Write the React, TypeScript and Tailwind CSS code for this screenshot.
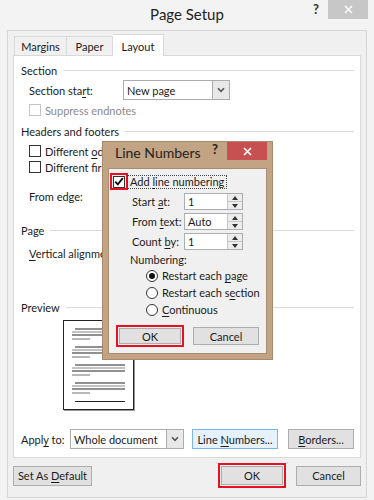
import React from "react";

const U = ({ children }: { children: React.ReactNode }) => (
  <span className="underline underline-offset-[2px]">{children}</span>
);

function Header({ label }: { label: string }) {
  return (
    <div className="flex items-center h-[16px] pl-[7px] pr-[6px]">
      <span>{label}</span>
      <div className="flex-1 h-px bg-[#dcdcdc] ml-[6px]" />
    </div>
  );
}

function Check({ disabled, checked }: { disabled?: boolean; checked?: boolean }) {
  return (
    <div
      className={
        "w-[12px] h-[12px] border bg-white flex items-center justify-center shrink-0 " +
        (disabled ? "border-[#c4c4c4] bg-[#f4f4f4]" : "border-[#333333]")
      }
    >
      {checked && (
        <svg width="10" height="9" viewBox="0 0 10 9">
          <path d="M1.2 4.6 L3.8 7.3 L8.8 1.2" fill="none" stroke="#111" strokeWidth="1.9" />
        </svg>
      )}
    </div>
  );
}

function Chevron() {
  return (
    <svg width="8" height="6" viewBox="0 0 8 6">
      <path d="M1 1.2 L4 4.3 L7 1.2" fill="none" stroke="#555" strokeWidth="1.6" />
    </svg>
  );
}

function Select({ w, h, text }: { w: string; h: string; text: string }) {
  return (
    <div className={"flex border border-[#acacac] bg-white " + w + " " + h}>
      <div className="flex-1 flex items-center pl-[3px]">{text}</div>
      <div className="w-[17px] border-l border-[#acacac] bg-[#e8e8e8] flex items-center justify-center">
        <Chevron />
      </div>
    </div>
  );
}

function Btn({
  children,
  className,
}: {
  children: React.ReactNode;
  className: string;
}) {
  return (
    <div className={"flex items-center justify-center border " + className}>
      <span>{children}</span>
    </div>
  );
}

function Spinner({ value }: { value: string }) {
  return (
    <div className="flex w-[59px] h-[17px] border border-[#abadb3] bg-white">
      <div className="flex-1 flex items-center pl-[3px]">{value}</div>
      <div className="w-[15px] flex flex-col bg-[#ececec] border-l border-[#c8c8c8]">
        <div className="flex-1 flex items-center justify-center border-b border-[#c8c8c8]">
          <svg width="6" height="4" viewBox="0 0 6 4">
            <path d="M0 4 L3 0 L6 4 Z" fill="#333" />
          </svg>
        </div>
        <div className="flex-1 flex items-center justify-center">
          <svg width="6" height="4" viewBox="0 0 6 4">
            <path d="M0 0 L3 4 L6 0 Z" fill="#333" />
          </svg>
        </div>
      </div>
    </div>
  );
}

function Radio({ checked }: { checked?: boolean }) {
  return (
    <div className="w-[12px] h-[12px] rounded-full border border-[#333] bg-white flex items-center justify-center shrink-0">
      {checked && <div className="w-[6px] h-[6px] rounded-full bg-[#111]" />}
    </div>
  );
}

function PreviewPage() {
  const groups = [329, 347, 365, 383];
  const lines: React.ReactNode[] = [];
  groups.forEach((g, i) => {
    const y = g - 320;
    lines.push(<line key={i + "a"} x1={12} x2={62} y1={y} y2={y} stroke="#222" strokeWidth="1" />);
    lines.push(<line key={i + "b"} x1={9} x2={62} y1={y + 3} y2={y + 3} stroke="#888" strokeWidth="1.2" />);
    lines.push(<line key={i + "c"} x1={9} x2={62} y1={y + 6} y2={y + 6} stroke="#222" strokeWidth="1" />);
    lines.push(<line key={i + "d"} x1={9} x2={27} y1={y + 10} y2={y + 10} stroke="#888" strokeWidth="1.2" />);
  });
  return (
    <div className="ml-[49px] mt-[5px] w-[71px] h-[90px] border border-[#222] bg-white shadow-[1px_1px_0_#9a9a9a]">
      <svg width="69" height="88" viewBox="0 0 69 88">
        <g transform="translate(-1,-1)">
          {lines}
          <line x1={12} x2={62} y1={81.5} y2={81.5} stroke="#222" strokeWidth="1" />
        </g>
      </svg>
    </div>
  );
}

function LineNumbersDialog() {
  return (
    <div className="absolute left-[102px] top-[141px] w-[171px] h-[219px] bg-[#c2a383] border border-[#a88a6c] flex flex-col">
      <div className="h-[26px] flex items-start relative">
        <div className="pl-[12px] pt-[4px] text-[14px] text-[#222]">Line Numbers</div>
        <div className="flex-1" />
        <div className="pt-[1px] mr-[9px] text-[13px] font-bold text-[#222]">?</div>
        <div className="w-[40px] h-[18px] bg-[#c75050] flex items-center justify-center mr-[5px]">
          <svg width="9" height="9" viewBox="0 0 9 9">
            <path d="M1 1 L8 8 M8 1 L1 8" stroke="#fff" strokeWidth="1.6" />
          </svg>
        </div>
      </div>
      <div className="mx-[5px] mb-[5px] flex-1 bg-[#f0f0f0] border border-[#a98d70] flex flex-col">
        <div className="flex items-center pt-[4px] pl-[1px]">
          <div className="w-[18px] h-[17px] border-2 border-[#e81123] flex items-center justify-center">
            <Check checked />
          </div>
          <div className="h-[14px] border border-dotted border-[#444] flex items-center px-[2px] -ml-px">
            <span>
              Add <U>l</U>ine numbering
            </span>
          </div>
        </div>
        <div className="flex flex-col gap-[3px] mt-[3px] pl-[23px]">
          <div className="flex items-center h-[17px]">
            <div className="w-[52px]">
              Start <U>a</U>t:
            </div>
            <Spinner value="1" />
          </div>
          <div className="flex items-center h-[17px]">
            <div className="w-[52px]">
              From <U>t</U>ext:
            </div>
            <Spinner value="Auto" />
          </div>
          <div className="flex items-center h-[17px]">
            <div className="w-[52px]">
              Count <U>b</U>y:
            </div>
            <Spinner value="1" />
          </div>
        </div>
        <div className="pl-[21px] mt-[1px] h-[16px] flex items-center">Numbering:</div>
        <div className="pl-[37px] flex flex-col">
          <div className="h-[17px] flex items-center gap-[4px]">
            <Radio checked />
            <span>
              Restart each <U>p</U>age
            </span>
          </div>
          <div className="h-[17px] flex items-center gap-[4px]">
            <Radio />
            <span>
              Restart each s<U>e</U>ction
            </span>
          </div>
          <div className="h-[17px] flex items-center gap-[4px]">
            <Radio />
            <span>
              <U>C</U>ontinuous
            </span>
          </div>
        </div>
        <div className="flex items-center mt-[7px] pl-[7px] gap-[9px]">
          <div className="w-[68px] h-[22px] border-2 border-[#e81123] p-px">
            <Btn className="w-full h-full bg-[#e1e1e1] border-[#adadad]">OK</Btn>
          </div>
          <Btn className="w-[66px] h-[18px] bg-[#e1e1e1] border-[#adadad]">Cancel</Btn>
        </div>
      </div>
    </div>
  );
}

export default function App() {
  return (
    <div className="relative w-[374px] h-[500px] bg-[#f3f3f3] overflow-hidden text-[11px] leading-none text-[#1b1b1b] font-['Lato','Open_Sans',sans-serif]">
      {/* title bar */}
      <div className="h-[30px] flex">
        <div className="flex-1 basis-0" />
        <div className="pt-[7px] text-[15px] text-[#222]">Page Setup</div>
        <div className="flex-1 basis-0 flex justify-end items-start">
          <div className="pt-[3px] mr-[9px] text-[13px] font-bold text-[#333]">?</div>
          <div className="w-[40px] h-[19px] bg-[#c7c7c7] flex items-center justify-center mr-[6px]">
            <svg width="9" height="9" viewBox="0 0 9 9">
              <path d="M1 1 L8 8 M8 1 L1 8" stroke="#fff" strokeWidth="1.5" />
            </svg>
          </div>
        </div>
      </div>

      {/* frame */}
      <div className="mx-[7px] h-[468px] border border-[#d6d6d6] bg-[#f0f0f0] flex flex-col px-[5px] pt-[3px]">
        {/* tabs */}
        <div className="flex items-end h-[21px] pl-[1px]">
          <div className="w-[53px] h-[19px] border border-b-0 border-[#d9d9d9] bg-[#f0f0f0] flex items-center justify-center">
            Margins
          </div>
          <div className="w-[46px] h-[19px] border border-b-0 border-l-0 border-[#d9d9d9] bg-[#f0f0f0] flex items-center justify-center">
            Paper
          </div>
          <div className="relative z-10 -mb-px w-[51px] h-[22px] border border-b-0 border-l-0 border-[#d9d9d9] bg-white flex items-start pt-[6px] justify-center">
            Layout
          </div>
        </div>

        {/* panel */}
        <div className="h-[403px] border border-[#d9d9d9] bg-white flex flex-col pt-[6px]">
          <Header label="Section" />
          <div className="flex items-center h-[20px] mt-[2px] pl-[15px]">
            <div className="w-[94px]">
              Section sta<U>r</U>t:
            </div>
            <Select w="w-[107px]" h="h-[20px]" text="New page" />
          </div>
          <div className="flex items-center h-[16px] mt-[2px] pl-[15px] gap-[4px] text-[#8a8a8a]">
            <Check disabled />
            <span>Suppress endnotes</span>
          </div>
          <div className="mt-[5px]">
            <Header label="Headers and footers" />
          </div>
          <div className="flex items-center h-[16px] mt-[4px] pl-[15px] gap-[4px]">
            <Check />
            <span>
              Different <U>o</U>dd and even
            </span>
          </div>
          <div className="flex items-center h-[16px] pl-[15px] gap-[4px]">
            <Check />
            <span>Different first page</span>
          </div>
          <div className="flex items-center h-[16px] mt-[13px] pl-[15px]">From edge:</div>
          <div className="mt-[18px]">
            <Header label="Page" />
          </div>
          <div className="flex items-center h-[16px] mt-[7px] pl-[15px]">
            <span>
              <U>V</U>ertical alignment:
            </span>
          </div>
          <div className="mt-[38px]">
            <Header label="Preview" />
          </div>
          <PreviewPage />
          <div className="flex items-center h-[20px] mt-[19px] pl-[7px]">
            <div className="w-[49px]">
              Appl<U>y</U> to:
            </div>
            <Select w="w-[114px]" h="h-[20px]" text="Whole document" />
            <Btn className="ml-[8px] w-[86px] h-[20px] bg-[#e5f1fb] border-[#7eb4ea]">
              Line <U>N</U>umbers...
            </Btn>
            <Btn className="ml-[10px] w-[66px] h-[20px] bg-[#e1e1e1] border-[#adadad]">
              <U>B</U>orders...
            </Btn>
          </div>
        </div>

        {/* bottom buttons */}
        <div className="flex items-center h-[25px] mt-[5px]">
          <Btn className="w-[79px] h-[20px] bg-[#e1e1e1] border-[#adadad]">
            Set As <U>D</U>efault
          </Btn>
          <div className="flex-1" />
          <div className="w-[68px] h-[25px] border-2 border-[#e81123] p-px">
            <Btn className="w-full h-full bg-[#e1e1e1] border-[#adadad]">OK</Btn>
          </div>
          <Btn className="ml-[10px] w-[65px] h-[20px] bg-[#e1e1e1] border-[#adadad]">Cancel</Btn>
        </div>
      </div>

      <LineNumbersDialog />
    </div>
  );
}
